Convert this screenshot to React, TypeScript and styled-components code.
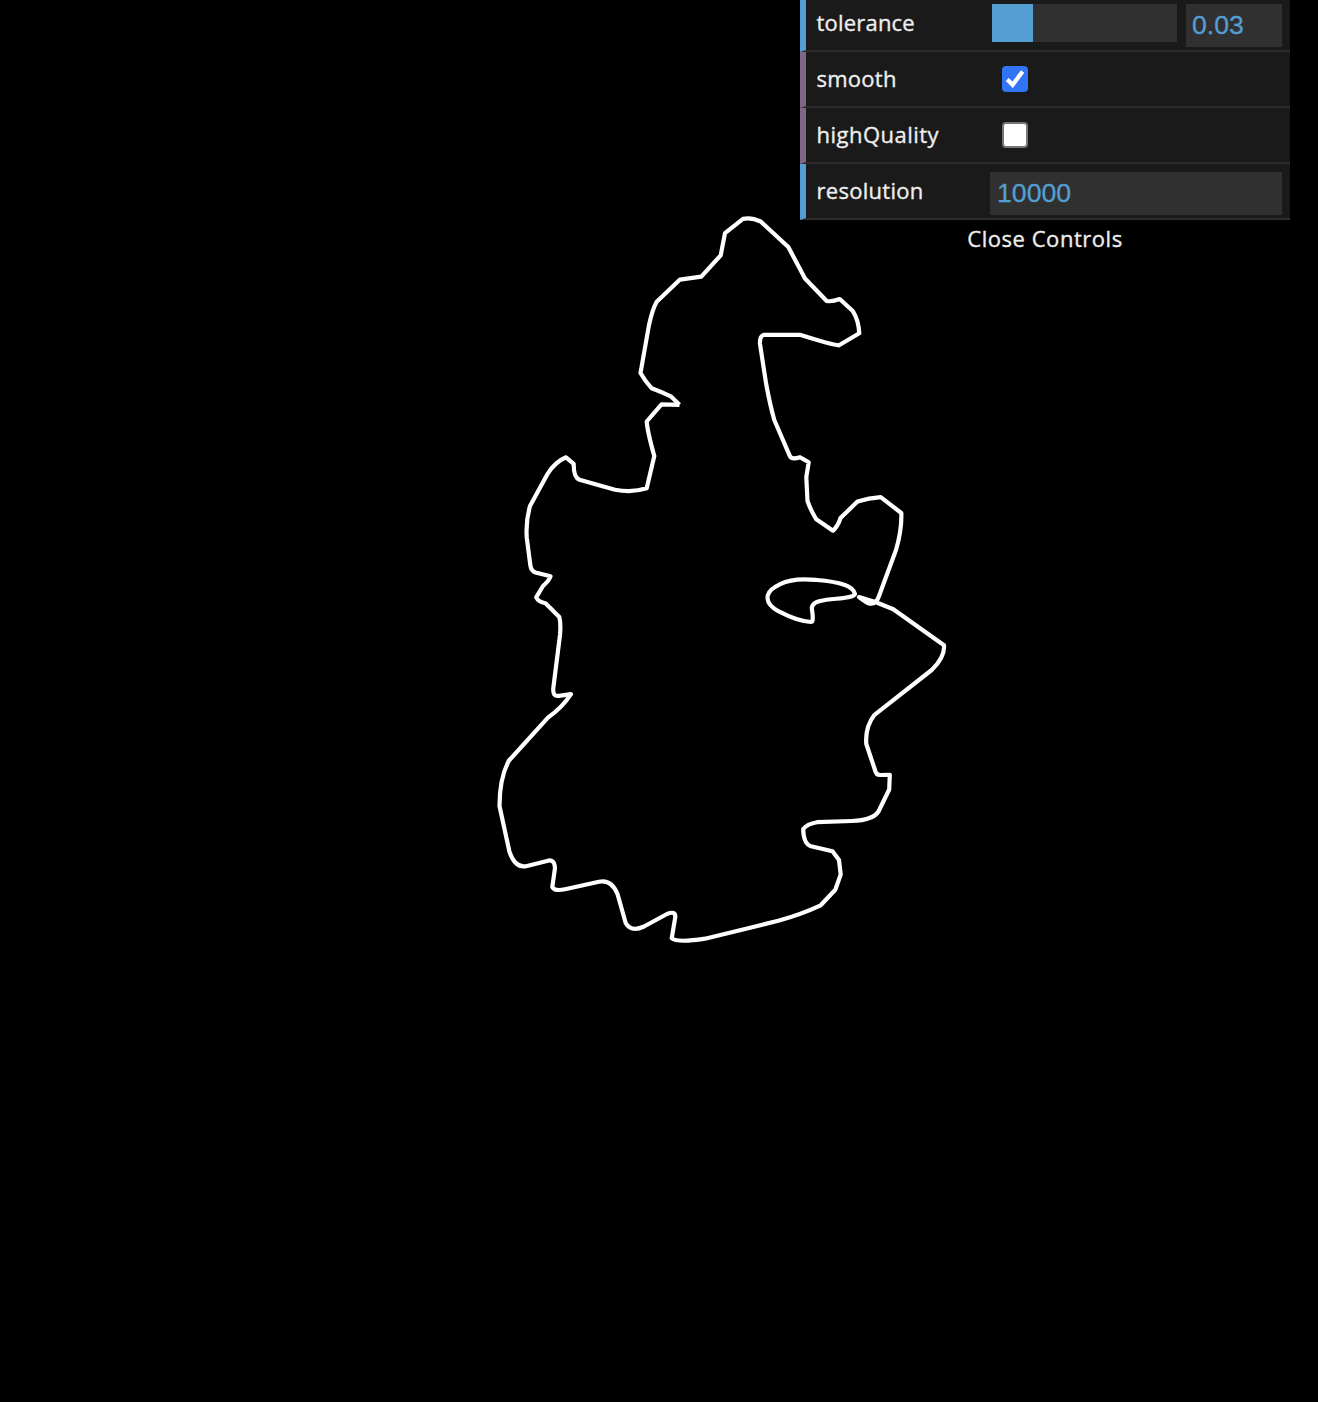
import React, { useState } from "react";
import styled, { createGlobalStyle } from "styled-components";

const GlobalStyle = createGlobalStyle`
  html, body { margin: 0; background: #000; overflow: hidden; }
  * { box-sizing: border-box; }
`;

const Stage = styled.main`
  display: grid;
  grid-template: 1402px / 1318px;
  background: #000;
  overflow: hidden;
`;

const Drawing = styled.svg`
  grid-area: 1 / 1;
  display: block;
  width: 1318px;
  height: 1402px;
  fill: none;
  stroke: #fff;
  stroke-width: 4.2px;
  stroke-linejoin: round;
`;

const Panel = styled.section`
  grid-area: 1 / 1;
  z-index: 1;
  justify-self: end;
  align-self: start;
  width: 490px;
  margin: -4px 28px 0 0;
  color: #eee;
  font: 500 22px "Open Sans", sans-serif;
  -webkit-text-stroke: 0.35px currentColor;
`;

const Row = styled.div<{ $accent: string }>`
  display: grid;
  grid-template-columns: 174px 1fr;
  align-items: start;
  height: 56px;
  padding: 0 8px 0 10px;
  background: #1a1a1a;
  border-left: 6px solid ${(p) => p.$accent};
  border-bottom: 2px solid #2c2c2c;
`;

const Label = styled.span<{ $spacing: number }>`
  padding-left: 0.5px;
  line-height: 52px;
  letter-spacing: ${(p) => p.$spacing}px;
  white-space: nowrap;
`;

const SliderGroup = styled.div`
  display: grid;
  grid-template-columns: 185px 96px;
  justify-content: space-between;
  padding: 8px 0 0 2px;
`;

const Track = styled.div`
  height: 38px;
  background: #303030;
`;

const Fill = styled.div`
  height: 100%;
  background: #539fd3;
`;

const Field = styled.input<{ $indent: number }>`
  width: 100%;
  height: 43px;
  margin: 0;
  padding: 0 0 0 ${(p) => p.$indent}px;
  border: 0;
  border-radius: 0;
  outline: 0;
  background: #303030;
  color: #539fd3;
  font: 26.67px "Liberation Sans", Arial, sans-serif;
  -webkit-text-stroke: 0.3px currentColor;
`;

const FieldWrap = styled.div`
  padding-top: 8px;
`;

const Check = styled.button<{ $on: boolean }>`
  display: grid;
  place-items: center;
  width: 26px;
  height: 26px;
  margin: 14px 0 0 12px;
  padding: 0;
  border: ${(p) => (p.$on ? "0" : "2px solid #767676")};
  border-radius: 4px;
  background: ${(p) => (p.$on ? "#3174f5" : "#fff")};
`;

const Tick = styled.svg`
  width: 26px;
  height: 26px;
  fill: none;
  stroke: #fff;
  stroke-width: 4.2px;
`;

const Close = styled.div`
  height: 40px;
  line-height: 36px;
  text-align: center;
  letter-spacing: 0.54px;
`;

const NUMBER = "#539fd3";
const BOOLEAN = "#806787";

const OUTLINE = `M679.5 404.8 L671.3 396.7 Q663 392.5 651.7 388.3 Q645 381 640.5 373
L649 325 Q652.5 309 656.7 301.7 L680 279.6 L701.3 276.7 L720.7 255.3 L725 233.2 L743 218.9
Q751 217 760.7 221.5 L788.3 247 L805 278.5 L826.7 301 Q832 302 839.7 299 L853 311.3
Q858.5 320 859.3 333.3 L839 345.3 Q832 345 800 334.8 L764 334.8 Q759.5 336 760 344
L766 383 Q770 405 774.3 420 L790 456.3 Q792 460 800 457.2 L808.7 462.3 L806.3 477
L807.5 501 Q811 511 816.3 519.3 L833 530.7 Q838 526 840.5 518 L857.5 501.5
Q869 498 880.7 497.2 L901.3 513 Q902 529 896 550 L879 596 Q876 605 869 603.5
Q865.5 602 859 597 L876 602.3 L893.3 609.2 L944 645.3 Q945 657 931.7 670 L874.5 714.8
Q865 727 866.3 744 L875 770 Q876 775 880 775 L889.8 774.8 L889.2 789.5 L878.5 811.5
Q873 820 852 821 L817 822.2 Q807 824 803.2 829 Q803.5 844 811 846.2 L832.5 851.3
L839 860 L840.7 874.5 L835.3 889.7 L820.7 905.3 Q802 914 778.3 920.8 L705 938.7
Q677 943 671.7 938.3 L675.3 917 Q675.5 910.5 667 914 L644 926.5
Q631 932.5 625.7 923 L617.5 894 Q611.5 879 599 881.7 L565 889.3
Q554.5 891.5 552.3 887 L555 868 Q554.5 858.5 547 861 L527 866
Q515.5 869 509.5 852 L499.5 806 Q499.5 778 509 760.5 L547.7 717.8
Q562 708 571 694.2 L559 695.8 Q552.5 697 553.3 688
L560 635 Q561 623 559.3 617 L545.5 603.2 Q538.5 602 536.2 597.3 L543 586
Q549.5 580 550.5 576.2 L535.5 572.5 Q531 571 530.3 565 L526.8 538
Q525.5 522 530 506 L547.5 474 Q555 462 566 457.3 L573.7 463.8
Q573.5 477.5 579.5 479.7 L615 489.7 Q632 493 646.7 488.3 L654.3 456
Q647.5 432 646.7 421.5 L661.5 404.3 L679.5 404.8`;

const LOOP = `M855 594 C853 599 833 598 820 601 Q810 603.5 812.2 611
Q813.8 622 811 622 Q798 621.5 778.3 611.2 C764 603.5 765 593 775 587
C790 577.5 807 579.2 817 580 Q834 581.2 845 585 Q853.5 588 855 594 Z`;

export default function App() {
  const [smooth, setSmooth] = useState(true);
  const [highQuality, setHighQuality] = useState(false);
  const [tolerance, setTolerance] = useState("0.03");
  const [resolution, setResolution] = useState("10000");

  return (
    <>
      <GlobalStyle />
      <Stage>
        <Drawing viewBox="0 0 1318 1402">
          <path d={OUTLINE} />
          <path d={LOOP} />
        </Drawing>
        <Panel>
          <Row $accent={NUMBER}>
            <Label $spacing={0.2}>tolerance</Label>
            <SliderGroup>
              <Track>
                <Fill style={{ width: `${(41 / 185) * 100}%` }} />
              </Track>
              <Field $indent={6} value={tolerance} onChange={(e) => setTolerance(e.target.value)} />
            </SliderGroup>
          </Row>
          <Row $accent={BOOLEAN}>
            <Label $spacing={0.25}>smooth</Label>
            <Check $on={smooth} onClick={() => setSmooth(!smooth)}>
              {smooth && (
                <Tick viewBox="0 0 26 26">
                  <path d="M5.2 13.4 L10.6 18.8 L20.6 5.6" />
                </Tick>
              )}
            </Check>
          </Row>
          <Row $accent={BOOLEAN}>
            <Label $spacing={0.48}>highQuality</Label>
            <Check $on={highQuality} onClick={() => setHighQuality(!highQuality)} />
          </Row>
          <Row $accent={NUMBER}>
            <Label $spacing={0.28}>resolution</Label>
            <FieldWrap>
              <Field $indent={7} value={resolution} onChange={(e) => setResolution(e.target.value)} />
            </FieldWrap>
          </Row>
          <Close>Close Controls</Close>
        </Panel>
      </Stage>
    </>
  );
}
